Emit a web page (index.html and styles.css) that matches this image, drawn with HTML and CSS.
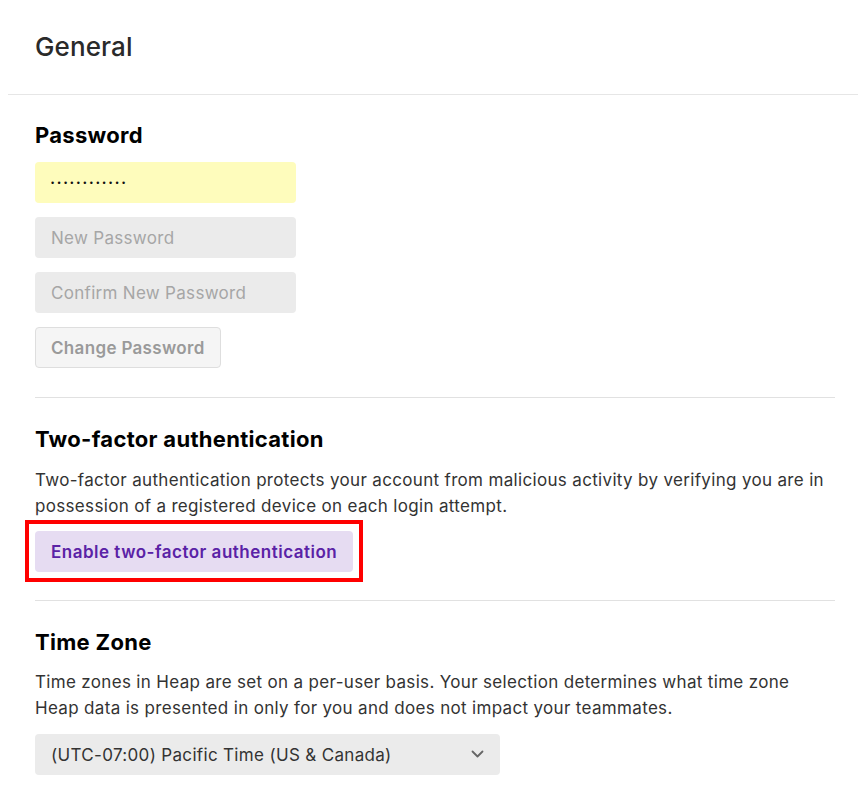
FILE: index.html
```html
<!DOCTYPE html>
<html>
<head>
<meta charset="utf-8">
<link rel="stylesheet" href="styles.css">
</head>
<body>
<div class="page">
  <header class="page-header">
    <h1 class="page-title">General</h1>
  </header>
  <main class="content">
    <section class="section section-password">
      <h2 class="section-title">Password</h2>
      <div class="field-stack">
        <input class="input input-filled" type="password" value="............">
        <input class="input" type="password" placeholder="New Password">
        <input class="input" type="password" placeholder="Confirm New Password">
        <div><button class="btn btn-disabled" type="button">Change Password</button></div>
      </div>
    </section>
    <section class="section section-2fa">
      <h2 class="section-title section-title-text">Two-factor authentication</h2>
      <p class="section-text">Two-factor authentication protects your account from malicious activity by verifying you are in possession of a registered device on each login attempt.</p>
      <div class="highlight">
        <button class="btn btn-primary-soft" type="button">Enable two-factor authentication</button>
      </div>
    </section>
    <section class="section section-tz">
      <h2 class="section-title">Time Zone</h2>
      <p class="section-text">Time zones in Heap are set on a per-user basis. Your selection determines what time zone Heap data is presented in only for you and does not impact your teammates.</p>
      <div class="select">
        <span class="select-value">(UTC-07:00) Pacific Time (US &amp; Canada)</span>
        <svg class="select-chevron" width="13" height="9" viewBox="0 0 13 9"><path d="M1.5 1.5l5 5 5-5" fill="none" stroke="#666" stroke-width="1.8" stroke-linecap="round" stroke-linejoin="round"/></svg>
      </div>
    </section>
  </main>
</div>
</body>
</html>
```
FILE: styles.css
```css
* { box-sizing: border-box; }
html, body { margin: 0; padding: 0; background: #fff; }
body {
  font-family: Inter, "Liberation Sans", sans-serif;
  color: #333;
  font-size: 17px;
  letter-spacing: 0.33px;
}
.page-header {
  margin-left: 8px;
  height: 95px;
  border-bottom: 1px solid #e6e6e6;
  padding: 29px 0 0 27px;
}
.page-title {
  margin: 0;
  font-size: 26px;
  font-weight: 500;
  color: #2a2a2a;
  line-height: 36px;
  letter-spacing: 0.1px;
}
.content {
  padding: 0 23px 0 35px;
}
.section {
  border-top: 1px solid #e1e1e1;
  padding: 26px 0 24px;
}
.section:first-child {
  border-top: none;
  padding-top: 25px;
}
.section-password { padding-bottom: 29px; }
.section-2fa { padding-bottom: 18px; }
.section-title {
  margin: 0 0 12px;
  font-size: 22px;
  font-weight: 700;
  color: #000;
  line-height: 30px;
  letter-spacing: 0.3px;
}
.section-title-text { margin-bottom: 13px; }
.field-stack {
  display: flex;
  flex-direction: column;
  gap: 14px;
}
.input {
  width: 261px;
  height: 41px;
  border: none;
  border-radius: 4px;
  background: #ebebeb;
  padding: 0 16px;
  font-family: inherit;
  font-size: 17px;
  letter-spacing: 0.3px;
  color: #222;
  outline: none;
}
.input::placeholder { color: #a6a6a6; }
.input-filled {
  background: #fefcbc;
  font-family: "Liberation Sans", sans-serif;
  font-size: 9px;
  letter-spacing: 3.3px;
  color: #111;
}
.btn {
  font-family: inherit;
  font-size: 17px;
  font-weight: 600;
  height: 41px;
  border-radius: 4px;
  padding: 0 15px;
  letter-spacing: 0.33px;
  cursor: pointer;
}
.btn-disabled {
  background: #f5f5f5;
  border: 1px solid #dedede;
  color: #9a9a9a;
}
.section-text {
  margin: 0;
  line-height: 26px;
  color: #333;
}
.section-2fa .section-text { margin-bottom: 1px; }
.highlight {
  display: inline-block;
  border: 4px solid #f00;
  padding: 7px 6px 6px;
  margin-left: -10px;
}
.btn-primary-soft {
  display: block;
  background: #e6dcf2;
  border: none;
  color: #5a22a6;
  padding: 0 16px;
  letter-spacing: 0.5px;
}
.select {
  display: flex;
  align-items: center;
  justify-content: space-between;
  width: 465px;
  height: 41px;
  border-radius: 4px;
  background: #ebebeb;
  padding: 0 16px 0 16px;
  margin-top: 13px;
  color: #333;
}
```
